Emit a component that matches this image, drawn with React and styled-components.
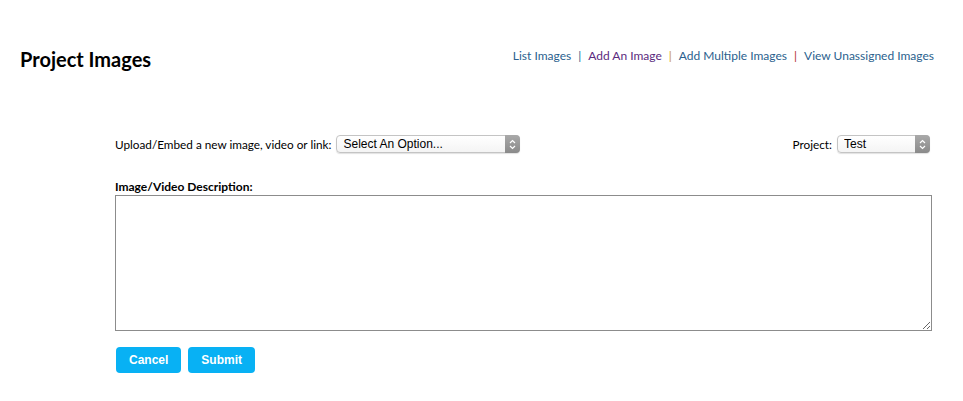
import styled, { createGlobalStyle } from 'styled-components';

const GlobalStyle = createGlobalStyle`
  body {
    margin: 0;
    background: #fff;
    font-family: "Lato", sans-serif;
  }
`;

const Page = styled.div`
  width: 963px;
  height: 401px;
  box-sizing: border-box;
  padding: 47px 29px 0 20px;
`;

const Header = styled.div`
  display: flex;
  justify-content: space-between;
  align-items: flex-start;
`;

const Title = styled.h1`
  margin: 0;
  font-family: "Lato", sans-serif;
  font-weight: 700;
  font-size: 20px;
  color: #000;
  line-height: 24px;
`;

const Nav = styled.nav`
  display: flex;
  align-items: center;
  font-size: 12px;
  line-height: 16px;
  padding-top: 1px;
`;

const NavLink = styled.a`
  color: ${(p) => (p.$visited ? '#5b2a7e' : '#2b5f8e')};
  text-decoration: none;
`;

const Sep = styled.span`
  color: ${(p) => p.$color};
  margin: 0 7px;
`;

const Form = styled.form`
  margin: 64px 2px 0 95px;
`;

const TopRow = styled.div`
  display: flex;
  justify-content: space-between;
  align-items: center;
  padding-right: 2px;
`;

const Field = styled.label`
  display: flex;
  align-items: center;
  gap: 5px;
  font-size: 11.75px;
  color: #000;
`;

const SelectWrap = styled.div`
  position: relative;
  width: ${(p) => p.$width}px;
  height: 18px;
`;

const Select = styled.select`
  appearance: none;
  width: 100%;
  height: 18px;
  box-sizing: border-box;
  border: 1px solid #c4c4c4;
  border-radius: 4px;
  background: linear-gradient(#fff, #f4f4f4);
  font-family: "Liberation Sans", sans-serif;
  font-size: 12px;
  color: #000;
  padding: 0 20px 0 6px;
  box-shadow: 0 1px 1px rgba(0, 0, 0, 0.12);
`;

const Arrow = styled.span`
  position: absolute;
  right: 0;
  top: 0;
  width: 15px;
  height: 18px;
  border-radius: 0 4px 4px 0;
  background: linear-gradient(#a9a9a9, #8a8a8a);
  display: flex;
  align-items: center;
  justify-content: center;
  pointer-events: none;
`;

const DescLabel = styled.div`
  margin-top: 26px;
  font-size: 12px;
  font-weight: 700;
  color: #000;
  line-height: 16px;
`;

const TextArea = styled.textarea`
  display: block;
  width: 100%;
  height: 136px;
  box-sizing: border-box;
  margin-top: 0;
  border: 1px solid #8c8c8c;
  resize: both;
`;

const Buttons = styled.div`
  display: flex;
  gap: 7px;
  margin-top: 16px;
  padding-left: 1px;
`;

const Button = styled.button`
  height: 26px;
  padding: 0 ${(p) => p.$pad}px;
  border: none;
  border-radius: 4px;
  background: #08b1f4;
  color: #fff;
  font-family: "Liberation Sans", sans-serif;
  font-weight: 700;
  font-size: 12px;
`;

function Chevrons() {
  return (
    <svg width="7" height="11" viewBox="0 0 7 11" fill="none" stroke="#fff" strokeWidth="1.2">
      <path d="M1 4 L3.5 1.5 L6 4" />
      <path d="M1 7 L3.5 9.5 L6 7" />
    </svg>
  );
}

function Dropdown({ width, options }) {
  return (
    <SelectWrap $width={width}>
      <Select>
        {options.map((o) => (
          <option key={o}>{o}</option>
        ))}
      </Select>
      <Arrow>
        <Chevrons />
      </Arrow>
    </SelectWrap>
  );
}

export default function App() {
  return (
    <>
      <GlobalStyle />
      <Page>
        <Header>
          <Title>Project Images</Title>
          <Nav>
            <NavLink href="#">List Images</NavLink>
            <Sep $color="#2b5f8e">|</Sep>
            <NavLink href="#" $visited>Add An Image</NavLink>
            <Sep $color="#c8962e">|</Sep>
            <NavLink href="#">Add Multiple Images</NavLink>
            <Sep $color="#b0301f">|</Sep>
            <NavLink href="#">View Unassigned Images</NavLink>
          </Nav>
        </Header>
        <Form onSubmit={(e) => e.preventDefault()}>
          <TopRow>
            <Field>
              Upload/Embed a new image, video or link:
              <Dropdown width={184} options={['Select An Option...']} />
            </Field>
            <Field>
              Project:
              <Dropdown width={93} options={['Test']} />
            </Field>
          </TopRow>
          <DescLabel>Image/Video Description:</DescLabel>
          <TextArea />
          <Buttons>
            <Button type="button" $pad={13}>Cancel</Button>
            <Button type="submit" $pad={13}>Submit</Button>
          </Buttons>
        </Form>
      </Page>
    </>
  );
}
